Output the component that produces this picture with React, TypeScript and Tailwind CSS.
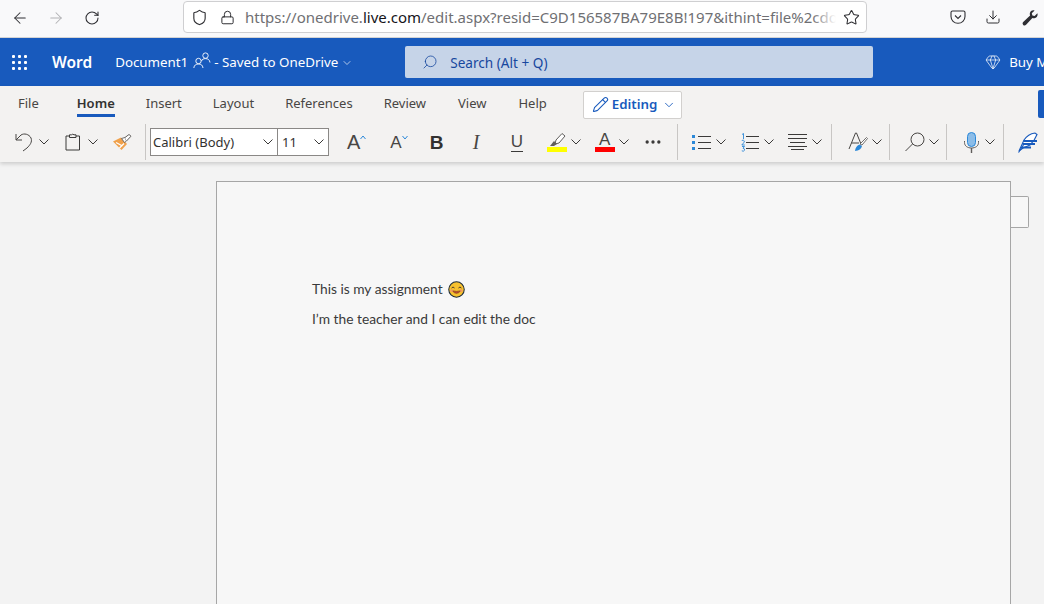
import { ArrowLeft, ArrowRight, RotateCw, Shield, Lock, Star, Download, ChevronDown, Pencil, Search, Gem, MoreHorizontal } from 'lucide-react';

const uiFont = "font-['Noto_Sans','Open_Sans',sans-serif]";

function Chevron({ className = '' }: { className?: string }) {
  return (
    <svg width="10" height="6" viewBox="0 0 10 6" fill="none" stroke="currentColor" strokeWidth="1" className={`shrink-0 text-[#3b3a39] ${className}`}>
      <path d="M0.5 0.5 L5 5 L9.5 0.5" />
    </svg>
  );
}

function Separator({ className = '' }: { className?: string }) {
  return <div className={`h-[36px] w-px shrink-0 bg-[#c8c6c4] ${className}`} />;
}

function Tab({ label, active, className = '' }: { label: string; active?: boolean; className?: string }) {
  return (
    <div className={`relative shrink-0 text-[13px] leading-[20px] ${active ? 'font-semibold text-[#323130]' : 'text-[#484644]'} ${className}`}>
      {label}
      {active && <div className="absolute -bottom-[4px] left-0 right-0 h-[3px] bg-[#185abd]" />}
    </div>
  );
}

function Smiley() {
  return (
    <svg width="17" height="17" viewBox="0 0 18 18" className="ml-[5px] shrink-0">
      <circle cx="9" cy="9" r="8.2" fill="#f7c12e" stroke="#1c2b3a" strokeWidth="1.1" />
      <path d="M3.8 7.4 Q5.3 5.4 6.9 7.4 M11.1 7.4 Q12.7 5.4 14.2 7.4" fill="none" stroke="#40302a" strokeWidth="1" />
      <path d="M4.6 10.4 Q9 15.8 13.4 10.4 Q9 11.6 4.6 10.4 Z" fill="#c2482f" stroke="#7a3a20" strokeWidth="0.7" />
      <circle cx="3.9" cy="10.2" r="1.4" fill="#f0906a" opacity="0.8" />
      <circle cx="14.1" cy="10.2" r="1.4" fill="#f0906a" opacity="0.8" />
    </svg>
  );
}

function BrowserBar() {
  return (
    <div className="flex h-[38px] items-start border-b border-[#d4d4d4] bg-[#f9f9fa] text-[#2f2f33]">
      <ArrowLeft size={18} strokeWidth={1.4} className="ml-[11px] mt-[9px] shrink-0" />
      <ArrowRight size={18} strokeWidth={1.4} className="ml-[18px] mt-[9px] shrink-0 text-[#b1b1b3]" />
      <RotateCw size={16} strokeWidth={1.6} className="ml-[19px] mt-[10px] shrink-0" />
      <div className="ml-[83px] mt-px flex h-[32px] w-[684px] shrink-0 items-center rounded-[4px] border border-[#cfcfd1] bg-white pl-[7px]">
        <Shield size={17} strokeWidth={1.6} className="shrink-0" />
        <Lock size={15} strokeWidth={1.6} className="ml-[12px] shrink-0" />
        <div className={`relative ml-[10px] w-[591px] shrink-0 overflow-hidden whitespace-nowrap text-[15px] leading-[20px] text-[#6f6f73] ${uiFont}`}>
          https://onedrive.<span className="text-[#15141a]">live.com</span>/edit.aspx?resid=C9D156587BA79E8B!197&amp;ithint=file%2cdo
          <div className="absolute bottom-0 right-0 top-0 w-[24px] bg-gradient-to-r from-transparent to-white" />
        </div>
        <Star size={17} strokeWidth={1.5} className="ml-[7px] shrink-0" />
      </div>
      <svg width="16" height="16" viewBox="0 0 16 16" fill="none" stroke="currentColor" strokeWidth="1.1" className="ml-[83px] mt-[9px] shrink-0">
        <path d="M2.5 2 H13.5 Q15 2 15 3.5 V7.5 A7 6.8 0 0 1 1 7.5 V3.5 Q1 2 2.5 2 Z" />
        <path d="M5 6.5 L8 9.5 L11 6.5" />
      </svg>
      <Download size={16} strokeWidth={1.5} className="ml-[19px] mt-[9px] shrink-0" />
      <svg width="16" height="16" viewBox="0 0 16 16" fill="currentColor" className="ml-[21px] mt-[10px] shrink-0">
        <path d="M15.4 3.2 L12.6 6 L10.4 5.4 L9.8 3.2 L12.6 0.5 C10.5 -0.2 8 1 7.8 3.6 C7.7 4.4 7.9 5 8.1 5.6 L1.2 11.9 C0.2 12.9 0.5 14.2 1.2 14.9 C2 15.6 3.1 15.8 4.1 14.8 L10.4 7.9 C11 8.1 11.7 8.3 12.4 8.2 C15 8 16.1 5.3 15.4 3.2 Z" />
      </svg>
    </div>
  );
}

function AppBar() {
  return (
    <div className={`flex h-[48px] items-center overflow-hidden bg-[#185abd] text-white ${uiFont}`}>
      <div className="ml-[12px] grid w-[15px] shrink-0 grid-cols-3 gap-[3px]">
        {Array.from({ length: 9 }).map((_, i) => (
          <div key={i} className="h-[3px] w-[3px] rounded-[1px] bg-white" />
        ))}
      </div>
      <span className="ml-[25px] shrink-0 pt-[2px] text-[15.5px] font-semibold">Word</span>
      <span className="ml-[23px] shrink-0 pt-[2px] text-[13.33px]">Document1</span>
      <svg width="18" height="17" viewBox="0 0 18 17" fill="none" stroke="currentColor" strokeWidth="0.9" className="mb-[3px] ml-[5px] shrink-0">
        <circle cx="5.5" cy="9" r="2.7" />
        <path d="M0.8 16 C1.2 13 3 12 5.5 12 C8 12 9.6 13 10 16" />
        <circle cx="12.5" cy="3.6" r="2.7" />
        <path d="M8.5 9 C9 7.4 10.5 6.6 12.5 6.6 C15 6.6 16.6 7.8 17 10.5" />
      </svg>
      <span className="ml-[3px] shrink-0 whitespace-nowrap pt-[2px] text-[13.33px]">- Saved to OneDrive</span>
      <ChevronDown size={12} strokeWidth={1.3} className="ml-[3px] mt-[2px] shrink-0" />
      <div className="ml-[52px] flex h-[32px] w-[468px] shrink-0 items-center rounded-[2px] bg-[#c6d4e8] text-[#17479e]">
        <Search size={16} strokeWidth={1.2} className="ml-[17px] -scale-x-100" />
        <span className="ml-[12px] pt-[2px] text-[13.6px]">Search (Alt + Q)</span>
      </div>
      <Gem size={16} strokeWidth={1.1} className="ml-[112px] shrink-0" />
      <span className="ml-[8px] shrink-0 whitespace-nowrap pt-[2px] text-[13.33px]">Buy Microsoft 365</span>
    </div>
  );
}

function RibbonTabs() {
  return (
    <div className="flex h-[34px] items-center overflow-hidden">
      <Tab label="File" className="ml-[18px]" />
      <Tab label="Home" active className="ml-[38px]" />
      <Tab label="Insert" className="ml-[31px]" />
      <Tab label="Layout" className="ml-[31px]" />
      <Tab label="References" className="ml-[31px]" />
      <Tab label="Review" className="ml-[31px]" />
      <Tab label="View" className="ml-[32px]" />
      <Tab label="Help" className="ml-[32px]" />
      <div className="ml-[36px] mt-[3px] flex h-[28px] w-[99px] shrink-0 items-center rounded-[2px] border border-[#d2d0ce] bg-white text-[#185abd]">
        <Pencil size={17} strokeWidth={1.5} className="ml-[8px] shrink-0" />
        <span className="ml-[3px] pt-[1px] text-[13.33px] font-semibold">Editing</span>
        <ChevronDown size={14} strokeWidth={1.5} className="ml-[5px] shrink-0" />
      </div>
      <div className="ml-[356px] mt-[2px] h-[28px] w-[8px] shrink-0 rounded-[2px] bg-[#185abd]" />
    </div>
  );
}

function SelectBox({ label, width, className = '' }: { label: string; width: string; className?: string }) {
  return (
    <div className={`flex h-[28px] shrink-0 items-center justify-between border border-[#8a8886] bg-white pl-[2px] pr-[3px] text-[13px] text-[#323130] ${width} ${className}`}>
      <span className="pt-[2px]">{label}</span>
      <Chevron className="mr-px" />
    </div>
  );
}

function Toolbar() {
  return (
    <div className={`flex h-[42px] items-center overflow-hidden pt-[2px] text-[#323130] ${uiFont}`}>
      <svg width="18" height="20" viewBox="0 0 18 20" fill="none" stroke="#484644" strokeWidth="1" className="ml-[15px] shrink-0">
        <path d="M1 2 V8 H7" />
        <path d="M1 8 L6 3 C9 1 14 2 16 6 C17.5 10 15 13 12 16 L8 19" />
      </svg>
      <Chevron className="ml-[6px]" />
      <svg width="16" height="18" viewBox="0 0 16 18" fill="none" stroke="#3b3a39" strokeWidth="1" className="ml-[16px] shrink-0">
        <path d="M4.5 3 H1 V17 H14.5 V3 H11" />
        <path d="M4.5 4.5 V1.8 H6.5 Q7.7 0.6 9 1.8 H11 V4.5 Z" />
      </svg>
      <Chevron className="ml-[7px]" />
      <svg width="20" height="17" viewBox="0 0 20 17" className="ml-[14px] shrink-0">
        <path d="M1 7.5 L9 3.5 L15 10 L9.5 16 Z" fill="#f0a14b" />
        <path d="M4 8.5 L10.5 12 M7.5 14 L12 9.5" stroke="#fff" strokeWidth="1.3" />
        <path d="M9.5 4.5 L13 3.5 L14.5 7 L12.5 8.5 Z" fill="#fff" stroke="#605e5c" strokeWidth="0.9" />
        <path d="M13 3.5 L17 0.5 L19 2.2 L14.5 7" fill="#fff" stroke="#605e5c" strokeWidth="1" />
      </svg>
      <Separator className="ml-[13px]" />
      <SelectBox label="Calibri (Body)" width="w-[128px]" className="ml-[4px]" />
      <SelectBox label="11" width="w-[52px]" className="-ml-px pl-[4px]" />
      <span className="ml-[18px] shrink-0 font-['Liberation_Sans',sans-serif] text-[20px] leading-none text-[#484644]">A</span>
      <svg width="6" height="5" viewBox="0 0 6 5" fill="none" stroke="#2b88d8" className="mb-[9px] shrink-0">
        <path d="M0.5 4 L3 1 L5.5 4" />
      </svg>
      <span className="ml-[24px] shrink-0 font-['Liberation_Sans',sans-serif] text-[17px] leading-none text-[#484644]">A</span>
      <svg width="6" height="5" viewBox="0 0 6 5" fill="none" stroke="#2b88d8" className="mb-[9px] shrink-0">
        <path d="M0.5 1 L3 4 L5.5 1" />
      </svg>
      <span className="ml-[22px] w-[13px] shrink-0 font-['Liberation_Sans',sans-serif] text-[19px] font-bold leading-none text-[#323130]">B</span>
      <span className="ml-[30px] w-[10px] shrink-0 font-['Liberation_Serif',serif] text-[20px] italic leading-none text-[#484644]">I</span>
      <span className="ml-[28px] w-[12px] shrink-0 border-b border-[#3b3a39] pb-[1px] text-center font-['Liberation_Sans',sans-serif] text-[17px] leading-none text-[#484644]">U</span>

      <div className="ml-[24px] flex w-[20px] shrink-0 flex-col items-center">
        <svg width="18" height="15" viewBox="0 0 18 15">
          <path d="M8 8 L14 1.5 L17 4 L11 11 L7 12 Z" fill="#fff" stroke="#605e5c" strokeWidth="1" />
          <path d="M2 14 L6 9 L9 12 L6 14 Z" fill="#605e5c" />
        </svg>
        <div className="h-[5px] w-[20px] bg-[#ffff00]" />
      </div>
      <Chevron className="ml-[4px]" />
      <div className="ml-[14px] flex w-[20px] shrink-0 flex-col items-center">
        <span className="font-['Liberation_Sans',sans-serif] text-[17px] leading-[15px] text-[#484644]">A</span>
        <div className="h-[5px] w-[20px] bg-[#ff0000]" />
      </div>
      <Chevron className="ml-[4px]" />
      <MoreHorizontal size={20} strokeWidth={2} className="ml-[14px] shrink-0 text-[#3b3a39]" />
      <Separator className="ml-[14px]" />

      <svg width="19" height="17" viewBox="0 0 19 17" className="ml-[14px] shrink-0">
        <path d="M0 1 H3 V4 H0 Z M0 7 H3 V10 H0 Z M0 13 H3 V16 H0 Z" fill="#2b88d8" />
        <path d="M6 2.5 H19 M6 8.5 H19 M6 14.5 H19" stroke="#3b3a39" />
      </svg>
      <Chevron className="ml-[5px]" />
      <svg width="18" height="19" viewBox="0 0 18 19" className="ml-[15px] shrink-0">
        <path d="M1 1.5 L2.5 0.5 V6 M0.8 7.5 Q2.5 6.5 3.4 8 Q3.4 9.5 0.8 12 H3.8 M1 13.5 H3.5 L2 15.2 Q4 15.5 3.5 17.3 Q2.5 18.8 0.8 17.8" fill="none" stroke="#2b88d8" strokeWidth="0.9" />
        <path d="M5 3.5 H18 M5 9.5 H18 M5 15.5 H18" stroke="#3b3a39" />
      </svg>
      <Chevron className="ml-[5px]" />
      <svg width="19" height="18" viewBox="0 0 19 18" stroke="#3b3a39" className="ml-[14px] shrink-0">
        <path d="M0 1.5 H19 M0 5.5 H19 M2 9.5 H17 M0 13.5 H19 M3 16.5 H16" />
      </svg>
      <Chevron className="ml-[5px]" />
      <Separator className="ml-[9px]" />

      <svg width="20" height="20" viewBox="0 0 20 20" className="ml-[16px] shrink-0">
        <path d="M1 17 L7.5 1 H8.5 L13 12 M3.5 11 H11" fill="none" stroke="#484644" strokeWidth="1" />
        <path d="M12 12 L18.5 5.5 L19.5 6.5 L14 13 Z" fill="#fff" stroke="#605e5c" strokeWidth="0.9" />
        <path d="M7 19 Q7.5 14 11.5 12.5 L14 14 Q13 18.5 7 19 Z" fill="#2b88d8" />
      </svg>
      <Chevron className="ml-[4px]" />
      <Separator className="ml-[7px]" />

      <svg width="20" height="20" viewBox="0 0 20 20" fill="none" stroke="#484644" strokeWidth="1" className="ml-[15px] shrink-0">
        <circle cx="12.5" cy="7.5" r="6.5" />
        <path d="M7.5 12 L0.5 19" />
      </svg>
      <Chevron className="ml-[4px]" />
      <Separator className="ml-[7px]" />

      <svg width="15" height="21" viewBox="0 0 15 21" className="ml-[17px] shrink-0">
        <rect x="3.5" y="0.5" width="8" height="14" rx="4" fill="#8cbde8" stroke="#2b88d8" />
        <path d="M0.5 9 V10.5 C0.5 14 3.5 16 7.5 16 C11.5 16 14.5 14 14.5 10.5 V9" fill="none" stroke="#605e5c" />
        <path d="M7.5 16 V21" stroke="#605e5c" strokeWidth="1.4" />
      </svg>
      <Chevron className="ml-[6px]" />
      <Separator className="ml-[8px]" />

      <svg width="20" height="21" viewBox="0 0 20 21" fill="none" stroke="#185abd" strokeWidth="1.1" className="ml-[14px] shrink-0">
        <path d="M1 19 L6 8 Q10 2 17 1 L19 2.5 Q17 8 12 13 L5 16 Z" fill="#fff" />
        <path d="M5.5 9 H19 M4.5 12 H17 M3 15.5 H13" strokeWidth="1.8" />
        <path d="M0.5 20.5 L6 12" />
      </svg>
    </div>
  );
}

function DocumentPage() {
  return (
    <main className="flex min-h-0 flex-1 items-start overflow-hidden bg-[#f3f3f3] pl-[216px] pt-[19px]">
      <div className="h-[500px] w-[795px] shrink-0 border border-[#a6a6a6] bg-[#f7f7f7] pl-[95px] pt-[96px] font-['Lato',sans-serif] text-[13.75px] text-[#3a3a3a]">
        <p className="flex h-[22px] items-center">
          This is my assignment
          <Smiley />
        </p>
        <p className="mt-[8px] h-[22px] leading-[22px]">I’m the teacher and I can edit the doc</p>
      </div>
      <div className="mt-[15px] h-[32px] w-[18px] shrink-0 rounded-r-[2px] border border-l-0 border-[#a6a6a6] bg-[#f7f7f7]" />
    </main>
  );
}

export default function App() {
  return (
    <div className="flex h-screen w-full flex-col overflow-hidden bg-[#f3f3f3]">
      <BrowserBar />
      <AppBar />
      <div className={`relative z-10 h-[76px] shrink-0 bg-[#f3f2f1] shadow-[0_2px_4px_rgba(0,0,0,0.16)] ${uiFont}`}>
        <RibbonTabs />
        <Toolbar />
      </div>
      <DocumentPage />
    </div>
  );
}
